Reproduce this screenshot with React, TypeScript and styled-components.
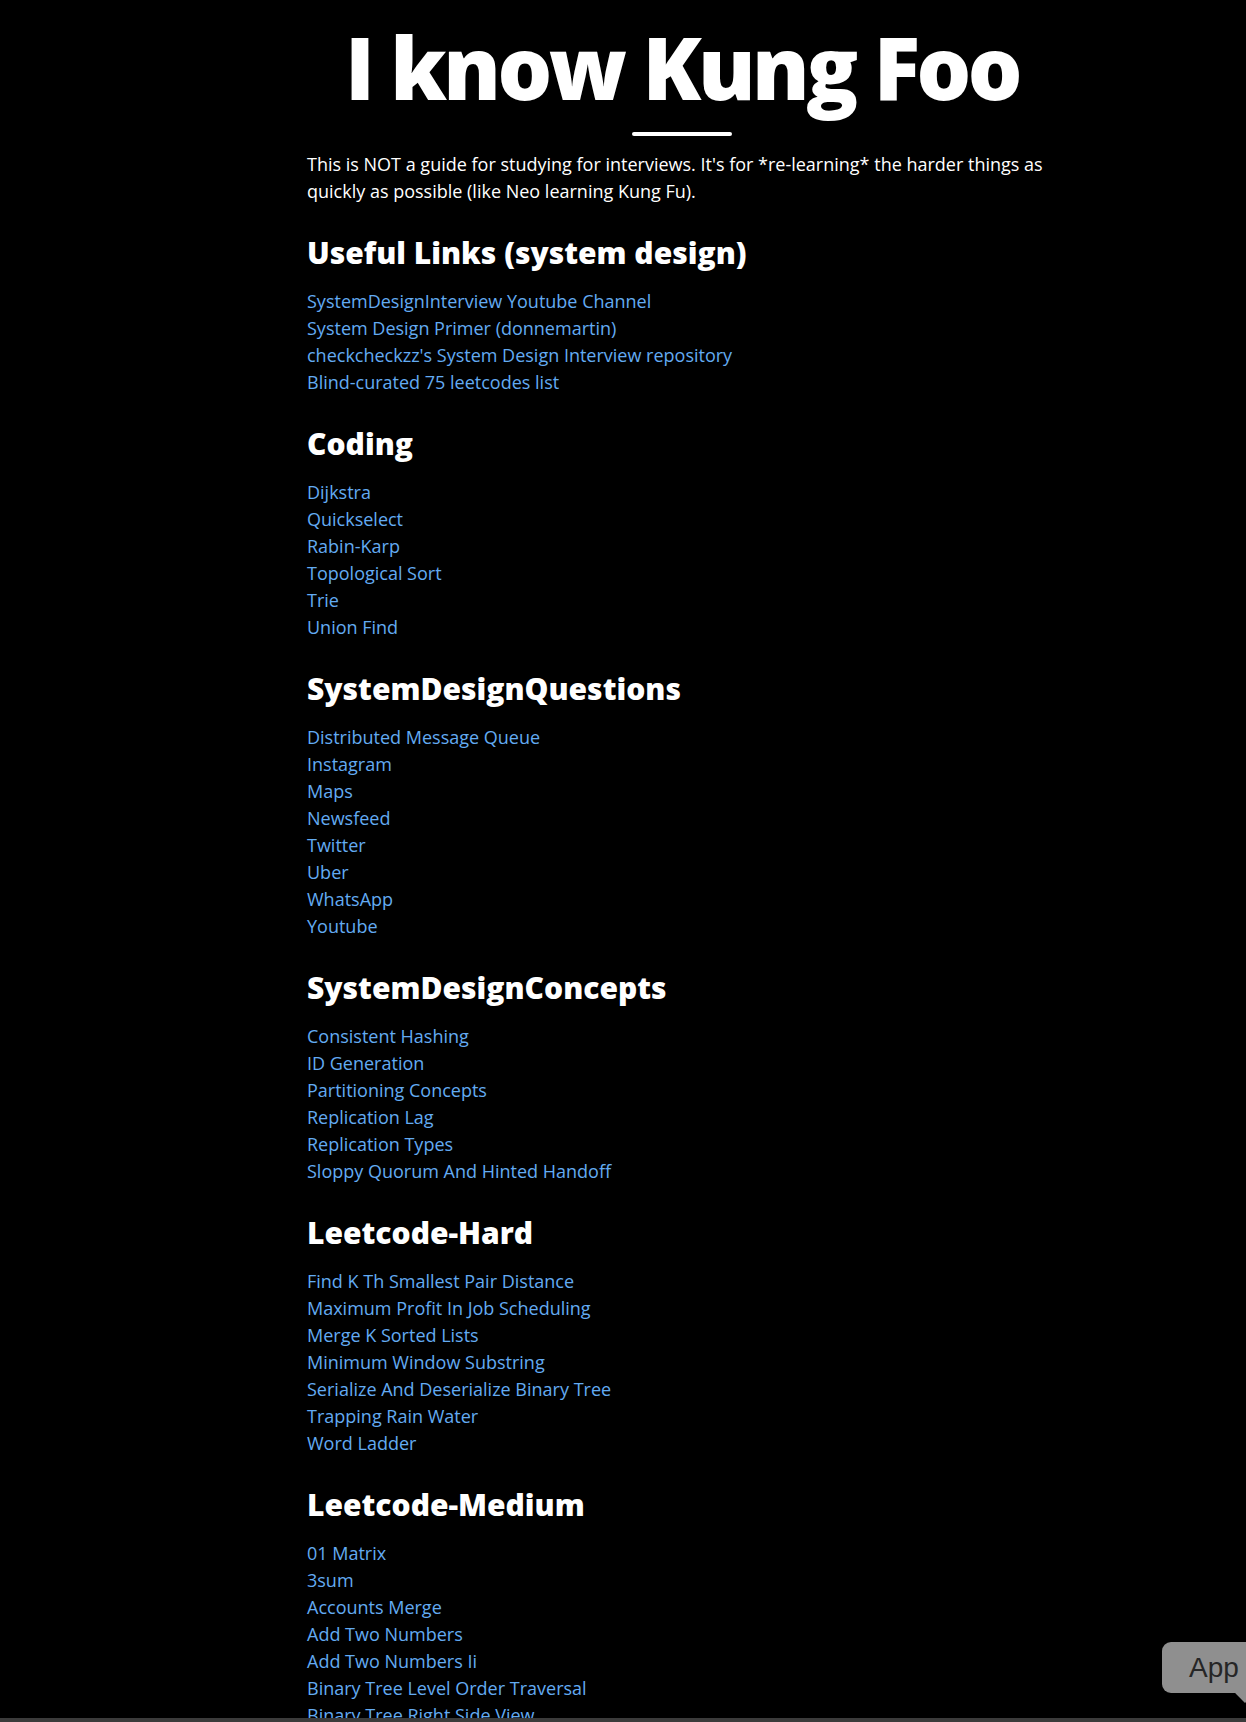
import React from "react";
import styled, { createGlobalStyle } from "styled-components";

const GlobalStyle = createGlobalStyle`
  html, body {
    margin: 0;
    padding: 0;
    background: #000;
  }
  body {
    font-family: "Open Sans", "Liberation Sans", sans-serif;
    color: #fff;
  }
`;

const Page = styled.div`
  background: #000;
  min-height: 1722px;
`;

const Main = styled.main`
  width: 750px;
  margin-left: 307px;
  display: flex;
  flex-direction: column;
`;

const Header = styled.header`
  display: flex;
  flex-direction: column;
  align-items: center;
`;

const Title = styled.h1`
  margin: 22px 0 0;
  font-family: "Open Sans", sans-serif;
  font-weight: 800;
  font-size: 86px;
  line-height: 90px;
  letter-spacing: -3.5px;
  color: #fff;
  white-space: nowrap;
`;

const Underline = styled.div`
  width: 100px;
  height: 4px;
  border-radius: 2px;
  background: #fff;
  margin-top: 20px;
`;

const Intro = styled.p`
  margin: 15px 0 0;
  font-size: 18px;
  line-height: 27px;
  color: #fff;
`;

const Section = styled.section`
  display: flex;
  flex-direction: column;
`;

const SectionTitle = styled.h2`
  margin: 30px 0 17px;
  font-family: "Open Sans", sans-serif;
  font-weight: 800;
  font-size: 30px;
  line-height: 36px;
  color: #fff;
`;

const LinkList = styled.ul`
  list-style: none;
  margin: 0;
  padding: 0;
`;

const LinkItem = styled.li`
  font-size: 18px;
  line-height: 27px;
`;

const Link = styled.a`
  color: #63abf2;
  text-decoration: none;
`;

const BottomBar = styled.div`
  position: fixed;
  left: 0;
  right: 0;
  bottom: 0;
  height: 4px;
  background: #3b3b3b;
`;

const DockTip = styled.div`
  position: fixed;
  left: 1162px;
  top: 1642px;
  width: 110px;
  height: 51px;
  border-radius: 9px;
  background: #8f8f8f;
  color: #262626;
  font-family: "Liberation Sans", Arial, sans-serif;
  font-size: 28px;
  display: flex;
  align-items: center;
  padding-left: 27px;
  box-sizing: border-box;
`;

const TipTail = styled.span`
  position: absolute;
  left: 76px;
  bottom: -7px;
  width: 14px;
  height: 14px;
  background: #8f8f8f;
  transform: rotate(45deg);
`;

type SectionData = { title: string; links: string[] };

const sections: SectionData[] = [
  {
    title: "Useful Links (system design)",
    links: [
      "SystemDesignInterview Youtube Channel",
      "System Design Primer (donnemartin)",
      "checkcheckzz's System Design Interview repository",
      "Blind-curated 75 leetcodes list",
    ],
  },
  {
    title: "Coding",
    links: ["Dijkstra", "Quickselect", "Rabin-Karp", "Topological Sort", "Trie", "Union Find"],
  },
  {
    title: "SystemDesignQuestions",
    links: [
      "Distributed Message Queue",
      "Instagram",
      "Maps",
      "Newsfeed",
      "Twitter",
      "Uber",
      "WhatsApp",
      "Youtube",
    ],
  },
  {
    title: "SystemDesignConcepts",
    links: [
      "Consistent Hashing",
      "ID Generation",
      "Partitioning Concepts",
      "Replication Lag",
      "Replication Types",
      "Sloppy Quorum And Hinted Handoff",
    ],
  },
  {
    title: "Leetcode-Hard",
    links: [
      "Find K Th Smallest Pair Distance",
      "Maximum Profit In Job Scheduling",
      "Merge K Sorted Lists",
      "Minimum Window Substring",
      "Serialize And Deserialize Binary Tree",
      "Trapping Rain Water",
      "Word Ladder",
    ],
  },
  {
    title: "Leetcode-Medium",
    links: [
      "01 Matrix",
      "3sum",
      "Accounts Merge",
      "Add Two Numbers",
      "Add Two Numbers Ii",
      "Binary Tree Level Order Traversal",
      "Binary Tree Right Side View",
    ],
  },
];

export default function App() {
  return (
    <Page>
      <GlobalStyle />
      <Main>
        <Header>
          <Title>I know Kung Foo</Title>
          <Underline />
        </Header>
        <Intro>
          This is NOT a guide for studying for interviews. It's for *re-learning* the harder things
          as quickly as possible (like Neo learning Kung Fu).
        </Intro>
        {sections.map((s) => (
          <Section key={s.title}>
            <SectionTitle>{s.title}</SectionTitle>
            <LinkList>
              {s.links.map((l) => (
                <LinkItem key={l}>
                  <Link href="#">{l}</Link>
                </LinkItem>
              ))}
            </LinkList>
          </Section>
        ))}
      </Main>
      <DockTip>
        App
        <TipTail />
      </DockTip>
      <BottomBar />
    </Page>
  );
}
